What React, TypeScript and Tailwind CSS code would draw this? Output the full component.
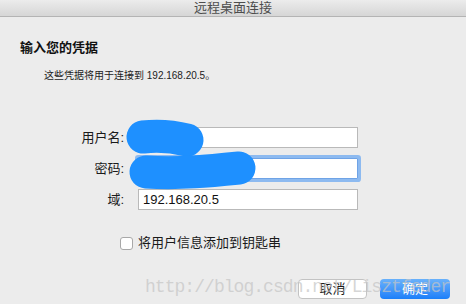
import React from "react";

const FONT = "font-['Liberation_Sans','Noto_Sans_CJK_SC',sans-serif]";

// 遮挡用户名/密码的蓝色涂抹
function Scribbles() {
  return (
    <svg className="absolute left-0 top-0 pointer-events-none" width="466" height="304" viewBox="0 0 466 304">
      <path d="M143 137 C 160 135, 175 137, 187 140" stroke="#1e90ff" strokeWidth="33" strokeLinecap="round" fill="none" />
      <path d="M146 172 C 180 174, 210 171, 239 168" stroke="#1e90ff" strokeWidth="33" strokeLinecap="round" fill="none" />
    </svg>
  );
}

function Field({ label, value, focused }: { label: string; value?: string; focused?: boolean }) {
  return (
    <>
      <div className="text-[13px] leading-[21px] text-[#1a1a1a] text-right">{label}</div>
      <div
        className={`h-[21px] bg-white text-[13px] leading-[19px] text-[#111] pl-[4px] ${
          focused ? "border border-[#6fa3e6] shadow-[0_0_0_3px_#8dbaf0] rounded-[1px]" : "border border-[#b9b9b9]"
        }`}
      >
        {value}
      </div>
    </>
  );
}

export default function App() {
  return (
    <div className={`relative w-[466px] h-[304px] overflow-hidden bg-[#ececec] ${FONT}`}>
      <div className="h-[17px] bg-gradient-to-b from-[#ececec] to-[#d6d6d6] border-b border-[#b4b4b4] text-center text-[13px] leading-[16px] text-[#4d4d4d]">
        远程桌面连接
      </div>

      <div className="pt-[23px] pl-[20px] text-[13px] leading-[16px] font-bold text-[#111]">输入您的凭据</div>
      <div className="mt-[14px] pl-[44px] text-[10px] leading-[12px] text-[#222]">这些凭据将用于连接到 192.168.20.5。</div>

      <div className="mt-[45px] grid grid-cols-[124px_220px] gap-x-[14px] gap-y-[10px]">
        <Field label="用户名:" />
        <Field label="密码:" focused />
        <Field label="域:" value="192.168.20.5" />
      </div>

      <div className="mt-[25px] pl-[120px] flex items-center gap-[5px]">
        <div className="w-[13px] h-[13px] bg-white border border-[#a8a8a8] rounded-[3px]" />
        <span className="text-[13px] leading-[16px] text-[#1a1a1a]">将用户信息添加到钥匙串</span>
      </div>

      <div className="mt-[28px] pr-[16px] flex justify-end gap-[13px]">
        <button className="w-[69px] h-[20px] bg-white border border-[#c3c3c3] rounded-[4px] text-[13px] leading-[18px] text-[#1a1a1a]">
          取消
        </button>
        <button className="w-[70px] h-[20px] bg-gradient-to-b from-[#69b1fb] to-[#1a7ff9] rounded-[4px] text-[13px] leading-[20px] text-white">
          确定
        </button>
      </div>

      <Scribbles />

      <div className="absolute left-[145px] top-[278px] pointer-events-none font-['Liberation_Mono',monospace] text-[18px] leading-[18px] tracking-[-0.96px] text-[#c4c4c4]/70 whitespace-nowrap">
        http://blog.csdn.net/Lisztfeder
      </div>
    </div>
  );
}
